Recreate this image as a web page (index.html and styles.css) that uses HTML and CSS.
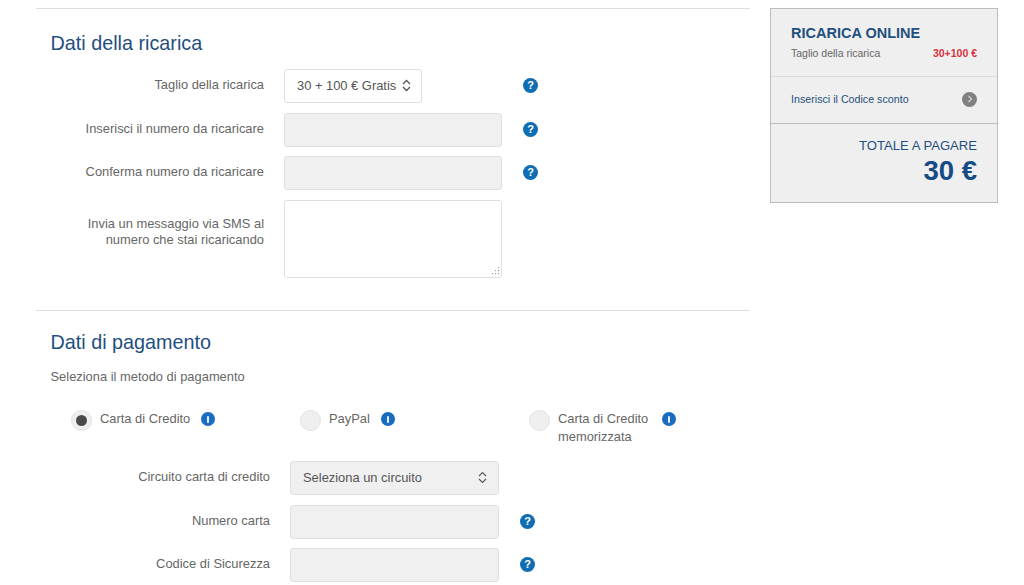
FILE: index.html
```html
<!DOCTYPE html>
<html lang="it">
<head>
<meta charset="utf-8">
<title>Ricarica online</title>
<link rel="stylesheet" href="styles.css">
</head>
<body>
<div class="page">
  <main class="main">
    <section class="section section-top">
      <h2 class="title">Dati della ricarica</h2>
      <div class="form form-a">
        <div class="row">
          <label class="label">Taglio della ricarica</label>
          <div class="control select select-white select-short"><span>30 + 100 € Gratis</span><svg class="updown" width="9" height="13" viewBox="0 0 9 13"><path d="M1 5 4.5 1.5 8 5M1 8 4.5 11.5 8 8" fill="none" stroke="#555" stroke-width="1.3"/></svg></div>
          <span class="help help-a">?</span>
        </div>
        <div class="row">
          <label class="label">Inserisci il numero da ricaricare</label>
          <div class="control input"></div>
          <span class="help">?</span>
        </div>
        <div class="row">
          <label class="label">Conferma numero da ricaricare</label>
          <div class="control input"></div>
          <span class="help">?</span>
        </div>
        <div class="row row-area">
          <label class="label label-area">Invia un messaggio via SMS al<br>numero che stai ricaricando</label>
          <div class="control textarea"><svg class="grip" width="9" height="9" viewBox="0 0 9 9"><g fill="#999"><rect x="7" y="0" width="1.2" height="1.2"/><rect x="7" y="3" width="1.2" height="1.2"/><rect x="7" y="6" width="1.2" height="1.2"/><rect x="4" y="3" width="1.2" height="1.2"/><rect x="4" y="6" width="1.2" height="1.2"/><rect x="1" y="6" width="1.2" height="1.2"/></g></svg></div>
        </div>
      </div>
    </section>
    <section class="section section-pay">
      <h2 class="title">Dati di pagamento</h2>
      <p class="intro">Seleziona il metodo di pagamento</p>
      <div class="methods">
        <div class="method">
          <span class="radio radio-on"></span>
          <span class="method-text"><span class="method-line">Carta di Credito<span class="info"><span class="info-bar"></span></span></span></span>
        </div>
        <div class="method">
          <span class="radio"></span>
          <span class="method-text"><span class="method-line">PayPal<span class="info"><span class="info-bar"></span></span></span></span>
        </div>
        <div class="method method-saved">
          <span class="radio"></span>
          <span class="method-text"><span class="method-line">Carta di Credito<span class="info"><span class="info-bar"></span></span></span><br>memorizzata</span>
        </div>
      </div>
      <div class="form form-b">
        <div class="row">
          <label class="label">Circuito carta di credito</label>
          <div class="control select select-grey"><span>Seleziona un circuito</span><svg class="updown" width="9" height="13" viewBox="0 0 9 13"><path d="M1 5 4.5 1.5 8 5M1 8 4.5 11.5 8 8" fill="none" stroke="#555" stroke-width="1.1"/></svg></div>
        </div>
        <div class="row">
          <label class="label">Numero carta</label>
          <div class="control input"></div>
          <span class="help">?</span>
        </div>
        <div class="row">
          <label class="label">Codice di Sicurezza</label>
          <div class="control input"></div>
          <span class="help">?</span>
        </div>
      </div>
    </section>
  </main>
  <aside class="cart">
    <div class="cart-block cart-head">
      <h3 class="cart-title">RICARICA ONLINE</h3>
      <div class="cart-line"><span>Taglio della ricarica</span><strong class="cart-price">30+100 €</strong></div>
    </div>
    <div class="cart-block cart-code">
      <a class="cart-link">Inserisci il Codice sconto</a>
      <span class="go"><svg width="6" height="8" viewBox="0 0 6 8"><path d="M1.5 1 4.5 4 1.5 7" fill="none" stroke="#ccc" stroke-width="1.4"/></svg></span>
    </div>
    <div class="cart-block cart-total">
      <div class="total-label">TOTALE A PAGARE</div>
      <div class="total-value">30 €</div>
    </div>
  </aside>
</div>
</body>
</html>
```

FILE: styles.css
```css
* { box-sizing: border-box; }
html, body { margin: 0; padding: 0; background: #fff; }
body {
  font-family: "Liberation Sans", Arial, sans-serif;
  color: #666;
  font-size: 12.9px;
  height: 585px;
  overflow: hidden;
}
.page {
  display: flex;
  align-items: flex-start;
  padding: 8px 26px 0 36px;
  gap: 20px;
}
.main { width: 714px; flex: none; }
.section { border-top: 1px solid #dedede; padding-left: 14.5px; }
.section-top { height: 302px; padding-top: 23px; }
.section-pay { padding-top: 20px; }
.title {
  margin: 0;
  font-size: 19.8px;
  line-height: 23px;
  font-weight: 400;
  color: #1f4f80;
}
.form { display: flex; flex-direction: column; gap: 9.5px; }
.form-a { margin-top: 14px; }
.form-b { margin-top: 9px; }
.row { display: flex; align-items: flex-start; height: 34px; }
.row-area { height: 78px; }
.label {
  flex: none;
  text-align: right;
  line-height: 16px;
  padding-top: 8px;
}
.form-a .label { width: 213.5px; margin-right: 20px; }
.form-b .label { width: 219.5px; margin-right: 20px; }
.label-area { padding-top: 16px; }
.control { border-radius: 3px; border: 1px solid #dfdfdf; }
.input { width: 218px; height: 34px; background: #f0f0f0; }
.form-b .input, .form-b .select { width: 209px; }
.textarea { width: 218px; height: 78px; background: #fff; position: relative; }
.grip { position: absolute; right: 1px; bottom: 1px; }
.select {
  height: 34px;
  display: flex;
  align-items: center;
  justify-content: space-between;
  padding: 0 11px 2px 12px;
  color: #555;
}
.select-white { background: #fff; width: 138px; padding-right: 10px; }
.select-grey { background: #f0f0f0; }
.updown { flex: none; }
.help {
  flex: none;
  width: 15px;
  height: 15px;
  margin: 9px 0 0 21px;
  border-radius: 50%;
  background: #0f6db3;
  color: #fff;
  font-size: 11px;
  font-weight: 700;
  line-height: 15px;
  text-align: center;
}
.help-a { margin-left: 101px; }
.intro { margin: 16px 0 0; line-height: 14px; }
.methods { display: flex; margin-top: 26px; height: 42px; padding-left: 20.5px; }
.method { width: 229px; flex: none; display: flex; align-items: flex-start; gap: 8px; }
.radio {
  flex: none;
  width: 21px;
  height: 21px;
  border-radius: 50%;
  background: #efefef;
  border: 1px solid #e2e2e2;
  display: flex;
  align-items: center;
  justify-content: center;
}
.radio-on::after {
  content: "";
  width: 11px;
  height: 11px;
  border-radius: 50%;
  background: #4a4a4a;
}
.method-text { line-height: 18px; white-space: nowrap; }
.method-line { display: inline-flex; align-items: center; }
.info {
  width: 14px;
  height: 14px;
  margin-left: 11px;
  border-radius: 50%;
  background: #1a6cc0;
  display: flex;
  align-items: center;
  justify-content: center;
}
.info-bar { width: 2px; height: 7px; border-radius: 1px; background: #e4eef8; }
.method-saved .info { margin-left: 14px; }
.cart {
  width: 228px;
  height: 195px;
  flex: none;
  background: #efefef;
  border: 1px solid #bdbdbd;
}
.cart-block { padding-left: 20px; padding-right: 20px; }
.cart-head { height: 68px; padding-top: 15px; border-bottom: 1px solid #dcdcdc; }
.cart-title {
  margin: 0;
  font-size: 14.5px;
  line-height: 18px;
  font-weight: 700;
  color: #1f4f80;
}
.cart-line {
  display: flex;
  justify-content: space-between;
  font-size: 10.5px;
  line-height: 13px;
  margin-top: 5px;
}
.cart-price { color: #d6333c; }
.cart-code {
  height: 47px;
  display: flex;
  align-items: center;
  justify-content: space-between;
  border-bottom: 1px solid #bdbdbd;
  padding-bottom: 2px;
}
.cart-link { font-size: 10.7px; color: #1f4f80; }
.go {
  width: 15px;
  height: 15px;
  border-radius: 50%;
  background: #808080;
  display: flex;
  align-items: center;
  justify-content: center;
}
.cart-total { text-align: right; padding-top: 14px; color: #1f4f80; }
.total-label { font-size: 13.1px; line-height: 16px; }
.total-value { font-size: 27.5px; line-height: 34px; font-weight: 700; color: #164b86; }
```
